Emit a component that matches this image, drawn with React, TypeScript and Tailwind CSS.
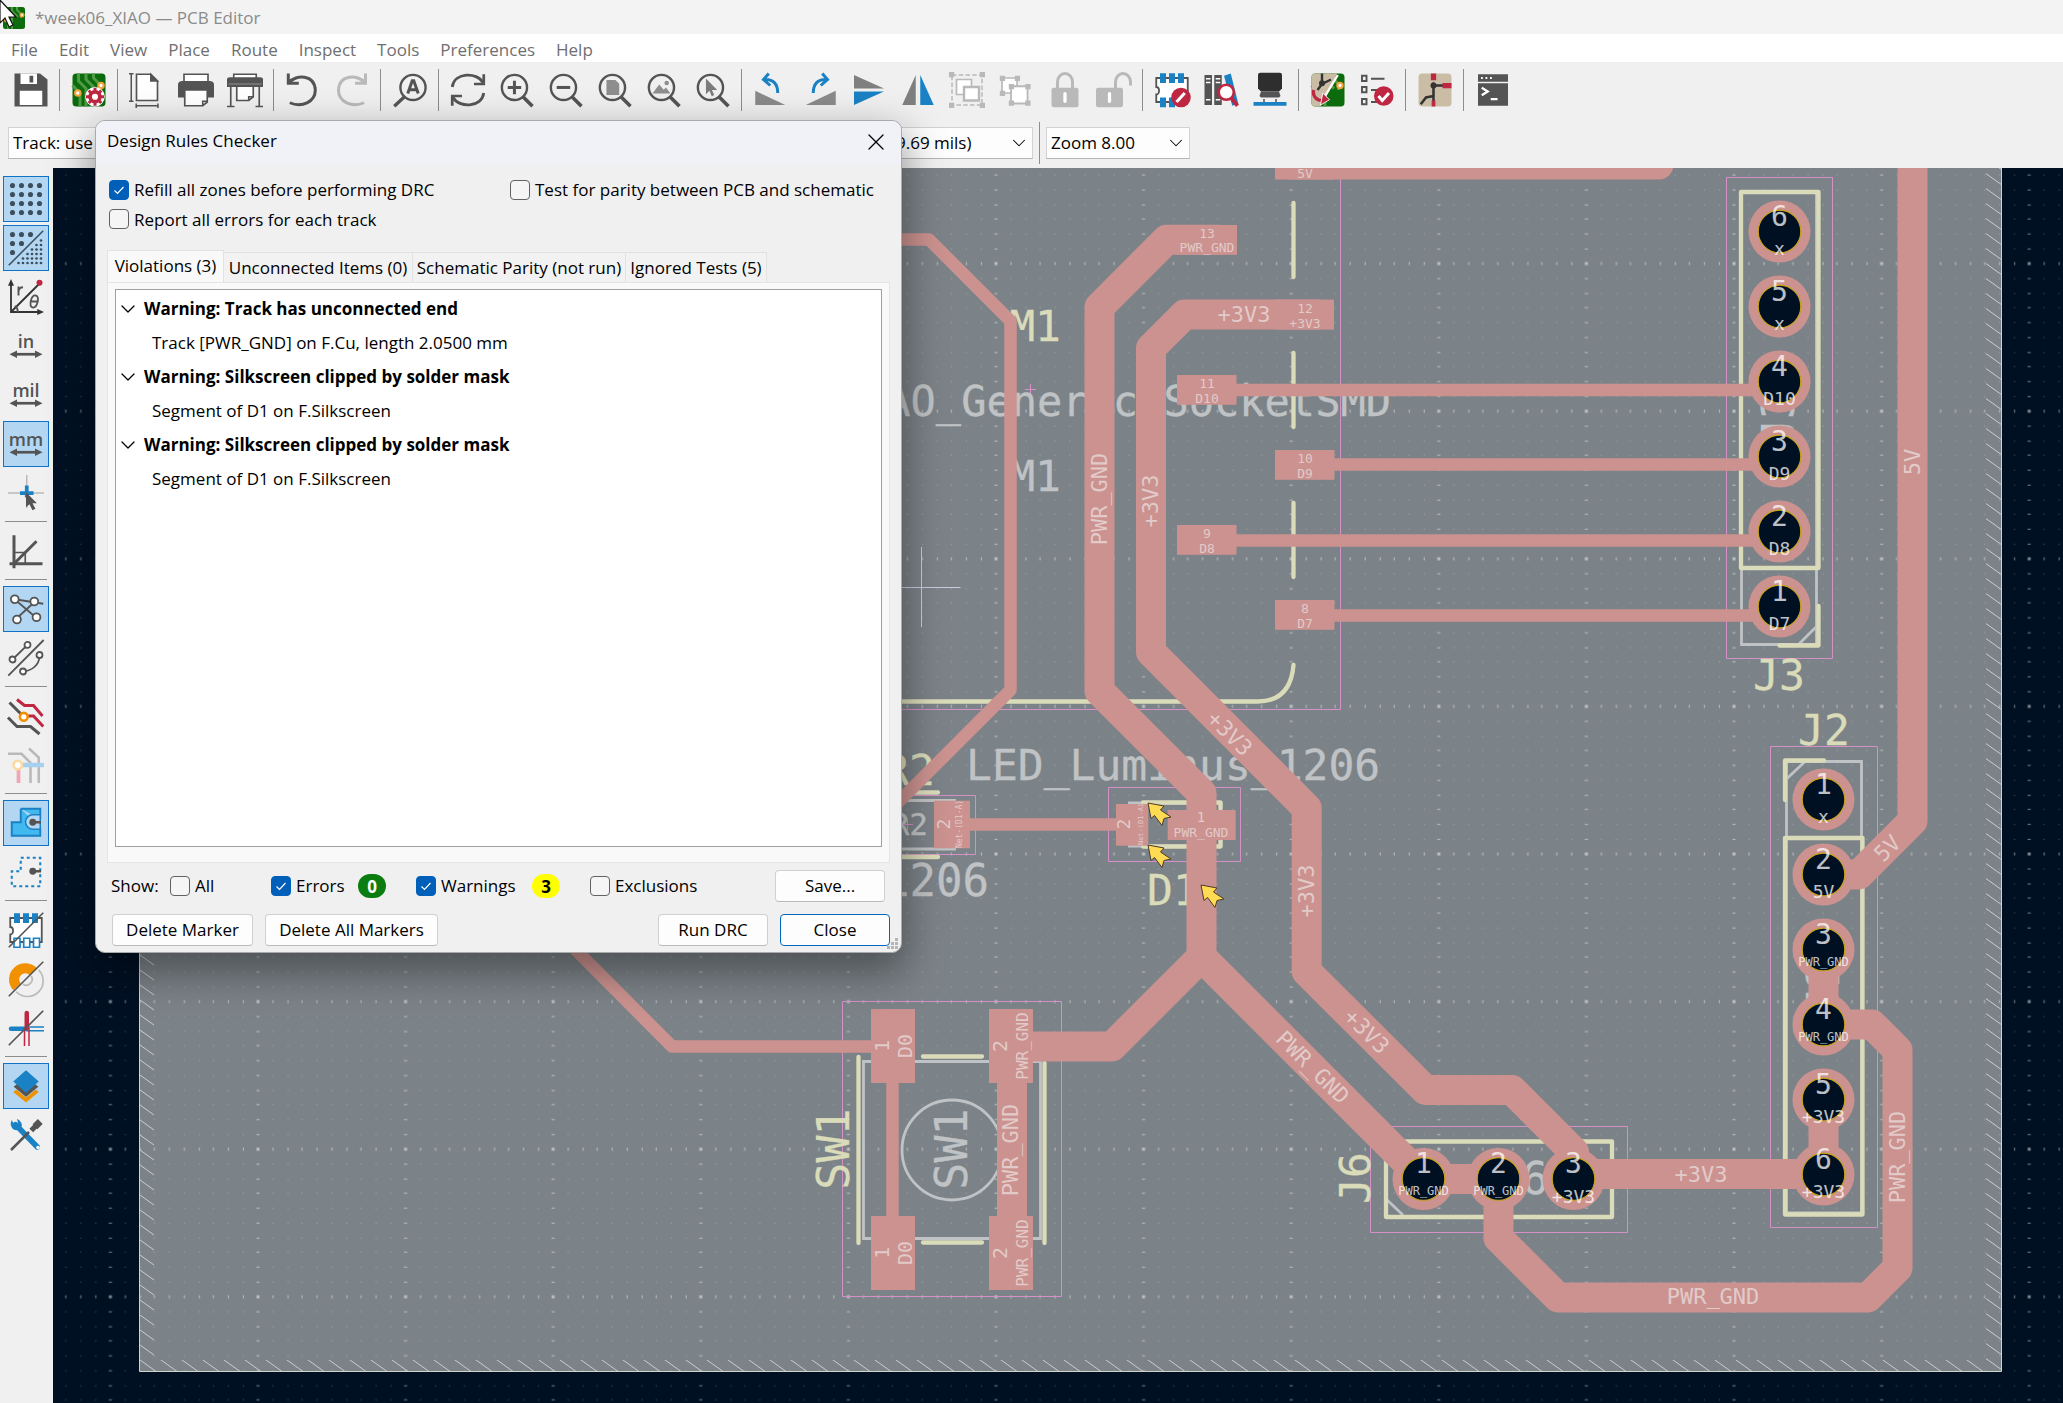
import React, { useState } from "react";
import { ChevronDown, X } from "lucide-react";

const UI = "font-['Open_Sans','Noto_Sans',sans-serif]";

/* ---------- icons ---------- */

type Kids = { children?: React.ReactNode };

const Ico = ({ children }: Kids) => (
  <svg viewBox="0 0 24 24" className="size-9 overflow-visible" fill="none" stroke="#545454" strokeWidth="1.5" aria-hidden="true">
    {children}
  </svg>
);

const G = "#545454";
const B = "#1a81c4";
const R = "#bf2641";
const L = "#b9b9b9";

const PcbBase = () => (
  <>
    <rect x="1" y="1" width="22" height="22" rx="2.5" fill="#0c6b0c" stroke="none" />
    <path d="M5 1v5l5 5v12M10 1v4l6 6M15 1v3l4 4v4M1 9l5 5v9" stroke="#4f9a45" strokeWidth="2" />
    <circle cx="4.5" cy="14" r="1.8" fill="#fff" stroke="#f2a33a" strokeWidth="1.4" />
    <circle cx="20" cy="9" r="1.8" fill="#fff" stroke="#f2a33a" strokeWidth="1.4" />
  </>
);

const Zoom = ({ children }: Kids) => (
  <Ico>
    <g transform="translate(-2.2 .8)">
      <circle cx="12.5" cy="9.5" r="8.4" strokeWidth="1.6" />
      <path d="M18 15.500l6.500 6.500" strokeWidth="2.400" />
      {children}
    </g>
  </Ico>
);

const IcSave = () => <Ico><path d="M1 1h17l5 4v18H1z" fill={G} stroke="none" /><path d="M5 1h11v7H5zM4.5 12.500h15V22h-15z" fill="#fff" stroke="none" /><path d="M11 2.500h2.500v4.500H11z" fill={G} stroke="none" /></Ico>;
const IcBoardSetup = () => (
  <Ico>
    <PcbBase />
    <circle cx="16" cy="16.500" r="4" fill="#fff" stroke="#fff" strokeWidth="5" />
    <circle cx="16" cy="16.500" r="3.300" stroke={R} strokeWidth="2.500" />
    <path d="M16 10.500v3M16 19.500v3M10 16.500h3M19 16.500h3M11.800 12.300l2 2M18.200 18.700l2 2M20.200 12.300l-2 2M13.800 18.700l-2 2" stroke={R} strokeWidth="2" />
  </Ico>
);
const IcPage = () => <Ico><g transform="translate(-1 0)"><path d="M6 1.500h9.500L20 6v13H6z" fill="#fff" strokeWidth="1.100" /><path d="M15.500 1.500V6H20z" fill={G} strokeWidth="1" /><path d="M2.500 1v18.500M1 1.200h3M1 19.500h3M5.500 22.500h15M5.800 21v3M20.300 21v3" strokeWidth="1" /></g></Ico>;
const IcPrint = () => <Ico><path d="M4 6V1.500h16V6" fill="#fff" strokeWidth="1.100" /><path d="M0 8.500Q0 6 3 6h18q3 0 3 2.500V17h-4v-5H4v5H0z" fill={G} stroke="none" /><path d="M4.500 12h15v8l-3 2.500h-12z" fill="#fff" strokeWidth="1.100" /><path d="M16.500 22.500v-3h3" strokeWidth="1.100" /></Ico>;
const IcPlot = () => <Ico><path d="M4.500 4V1.500h15V4" fill="#fff" strokeWidth="1.100" /><path d="M0 5q0-1.500 2-1.500h20q2 0 2 1.500v5H0z" fill={G} stroke="none" /><path d="M1 8h22" stroke="#9a9a9a" strokeWidth=".6" /><path d="M2.500 10v13M21.500 10v13M0 23h5M19 23h5" strokeWidth="1.100" /><path d="M6.500 9.500h11v7l-3 2.500h-8z" fill="#fff" strokeWidth="1.100" /><path d="M14.500 19v-2.500h3" strokeWidth="1.100" /></Ico>;
const IcUndo = () => <Ico><g transform="translate(-.8 0)"><path d="M3 1v6.500h7M3.500 7C8 1.500 20.500 1.500 21 12c0 8-9 12-17 8.500" strokeWidth="2" /></g></Ico>;
const IcRedo = () => <Ico><g stroke={L}><path d="M21 1v6.500h-7M20.500 7C16 1.500 3.500 1.500 3 12c0 8 9 12 17 8.500" strokeWidth="2" /></g></Ico>;
const IcFind = () => <Ico><g transform="translate(-.5 .8)"><circle cx="14.500" cy="9.500" r="8.400" strokeWidth="1.600" /><path d="M9 15.500l-7 6.500" strokeWidth="2.200" /><path d="M11 13.500l3-8.500h1l3 8.500M12 11h5" strokeWidth="2" /></g></Ico>;
const IcRefresh = () => <Ico><path d="M1.500 10C3 0 18 0 22 7M22.500 14c-1.500 10-16.500 10-20.500 3" strokeWidth="1.900" /><path d="M22.500 1.500V8H16M1.500 22.500V16H8" strokeWidth="1.800" /></Ico>;
const IcZoomIn = () => <Zoom><path d="M12.500 5v9M8 9.500h9" strokeWidth="2" /></Zoom>;
const IcZoomOut = () => <Zoom><path d="M8 9.500h9" strokeWidth="2" /></Zoom>;
const IcZoomPage = () => <Zoom><path d="M8.500 4.500h6L17 7v7.500H8.500z" fill="#8e8e8e" stroke="none" /></Zoom>;
const IcZoomObj = () => <Zoom><path d="M6.500 13.500l4.500-6 3 3.500 1.500-1.500 3 4z" fill="#8e8e8e" stroke="none" /><circle cx="16" cy="6.500" r="1.500" fill="#8e8e8e" stroke="none" /></Zoom>;
const IcZoomSel = () => <Zoom><path d="M9.500 3.500v10.500l2.300-2.300 1.600 3.600 1.600-.8-1.500-3.300h3.500z" fill="#7c7c7c" stroke="none" /></Zoom>;
const IcRotL = () => <Ico><path d="M1.500 12.500v9.500h20z" fill="#8a8a8a" stroke="none" /><path d="M10.500 1L7 5l4.500 4M7.500 5c6-.5 9 3 9 9" stroke={B} strokeWidth="2" /></Ico>;
const IcRotR = () => <Ico><path d="M22.500 12.500v9.500h-20z" fill="#8a8a8a" stroke="none" /><path d="M13.500 1L17 5l-4.500 4M16.500 5c-6-.5-9 3-9 9" stroke={B} strokeWidth="2" /></Ico>;
const IcFlipV = () => <Ico><path d="M2 2v9h20z" fill="#7f7f7f" stroke="none" /><path d="M2 22v-9h20z" fill={B} stroke="none" /></Ico>;
const IcFlipH = () => <Ico><path d="M1.500 22h9V2z" fill="#7f7f7f" stroke="none" /><path d="M22.500 22h-9V2z" fill={B} stroke="none" /></Ico>;
const IcGroup = () => <Ico><g stroke={L}><path d="M2 2h20v20H2z" strokeWidth="1" strokeDasharray="3 1.500" /><path d="M0 0h3.500v3.500H0zM20.500 0H24v3.500h-3.500zM0 20.500h3.500V24H0zM20.500 20.500H24V24h-3.500z" fill={L} stroke="none" /><path d="M5 5h10v10H5z" fill="#fff" strokeWidth="1.100" /><path d="M10 10h10v9H10z" fill="#fff" strokeWidth="1.600" /></g></Ico>;
const IcUngroup = () => <Ico><g stroke={L} transform="translate(-1.300 0)"><path d="M4 4h10v10H4z" fill="#fff" strokeWidth="1.100" /><path d="M10 9.500h11V21H10z" fill="#fff" strokeWidth="1.200" /><path d="M2.500 2.500H6V6H2.500zM12.500 2.500H16V6h-3.500zM2.500 12.500H6V16H2.500zM8.500 8H12v3.500H8.500zM19.500 8H23v3.500h-3.500zM8.500 19H12v3.500H8.500zM19.500 19H23v3.500h-3.500z" fill={L} stroke="none" /></g></Ico>;
const IcLock = () => <Ico><path d="M7 12V6.500a5 5.500 0 0 1 10 0V12" stroke={L} strokeWidth="2" /><rect x="3" y="10.500" width="18" height="13" rx="1.500" fill={L} stroke="none" /><path d="M12 14.500v5" stroke="#fff" strokeWidth="2.200" strokeLinecap="round" /></Ico>;
const IcUnlock = () => <Ico><path d="M13 12V6.500a5 5.500 0 0 1 10 0V9" stroke={L} strokeWidth="2" /><rect x="0" y="10.500" width="18" height="13" rx="1.500" fill={L} stroke="none" /><path d="M9 14.500v5" stroke="#fff" strokeWidth="2.200" strokeLinecap="round" /></Ico>;
const Chip = () => (
  <>
    <path d="M1.500 4h21v16h-21v-5c2.500 0 2.500-5 0-5z" fill="#fff" strokeWidth="1.200" />
    <path d="M4 .8h4v6.500H4zM10 .8h4v6.500h-4zM16 .8h4v6.500h-4z" fill={B} stroke="none" />
  </>
);
const IcFootprint = () => <Ico><Chip /><path d="M4 17h4v6.500H4zM10 17h4v6.500h-4z" fill={B} stroke="none" /><circle cx="18" cy="17" r="6.500" fill={R} stroke="none" /><path d="M15 20l5.500-6" stroke="#fff" strokeWidth="2" /></Ico>;
const IcLibrary = () => <Ico><path d="M1 2h5v20H1zM7.500 2h5v20h-5z" fill={G} stroke="none" /><path d="M14 2.500l4.500-1.500 5 20-4 1.500z" fill={B} stroke="none" /><path d="M2 4.500h3M2 7h3M8.500 4.500h3M8.500 7h3M2 18.500h3M8.500 18.500h3" stroke="#fff" strokeWidth="1" /><circle cx="15.500" cy="13.500" r="5" fill="#fff" stroke={R} strokeWidth="1.700" /><path d="M19 17.500l4 5" stroke={R} strokeWidth="2.600" /></Ico>;
const Ic3d = () => <Ico><path d="M4 2q0-1.500 1.500-1.500h13Q20 .5 20 2v9l-2 2H6l-2-2z" fill="#2e2e2e" stroke="none" /><path d="M6 13h12l1 3-1 1H6l-1-1z" fill={G} stroke="none" /><path d="M8 18v3M16 18v3" strokeWidth="1" /><path d="M1 20h22v2.500H1z" fill={B} stroke="none" /></Ico>;
const IcUpdate = () => (
  <Ico>
    <PcbBase />
    <path d="M3.500 1H18L7 23H3.500Q1 23 1 20.500v-17Q1 1 3.500 1z" fill="#cbbda5" stroke="none" />
    <path d="M8 1v6M8 8l6-3M8 8l-3 4" stroke="#333" strokeWidth="1.600" />
    <circle cx="8" cy="7.500" r="2" fill="#333" stroke="none" />
    <path d="M18.500 2L9.500 17" stroke="#fff" strokeWidth="1.600" />
    <path d="M2.500 12c-1 4 2 7.500 7 7" stroke={R} strokeWidth="2.200" />
    <path d="M8.500 14l4.500 4.500L7 22z" fill={R} stroke="#fff" strokeWidth=".6" />
  </Ico>
);
const IcDrc = () => <Ico><path d="M2 2.500h3v3.500H2zM2 10h3v3.500H2zM2 18h3v3.500H2zM8 4.500h9M8 12h4M8 20h4" strokeWidth="1.300" /><circle cx="16.500" cy="16" r="6.500" fill={R} stroke="none" /><path d="M13 16l2.500 3 4.500-5" stroke="#fff" strokeWidth="2" /></Ico>;
const IcSch = () => (
  <Ico>
    <rect x="1" y="1" width="22" height="22" rx="2.500" fill="#cbbda5" stroke="none" />
    <path d="M11 7v9l-5 1-3.500 4.500M11 9h7M11 16v4" stroke="#333" strokeWidth="1.700" />
    <path d="M11 1v4.500M17 9h6" stroke={R} strokeWidth="3.500" />
    <circle cx="11" cy="9" r="2" fill="#333" stroke="none" />
    <path d="M11 19v4" stroke={R} strokeWidth="2.500" />
  </Ico>
);
const IcConsole = () => <Ico><path d="M2 1.500h20v5H2zM2 7.500h20v15H2z" fill={G} stroke="none" /><path d="M4 4h1.200M7 4h1.200M10 4h1.200" stroke="#fff" strokeWidth="1.300" /><path d="M4.500 10.500l4 2.500-4 2.500M10.500 18h4.500" stroke="#fff" strokeWidth="1.500" /></Ico>;

/* left bar */
const SG = "#3c4d5c";
const dots = (step: number, n: number, x0: number, y0: number, r: number, keep: (i: number, j: number) => boolean) =>
  Array.from({ length: n * n }, (_, k) => [k % n, Math.floor(k / n)])
    .filter(([i, j]) => keep(i, j))
    .map(([i, j]) => <circle key={`${i}-${j}-${step}`} cx={x0 + i * step} cy={y0 + j * step} r={r} fill={SG} stroke="none" />);
const IcGrid = () => <Ico>{dots(6, 4, 3, 3, 1.7, () => true)}</Ico>;
const IcGridOv = () => <Ico>{dots(6, 3, 3, 3, 1.7, (i, j) => i + j < 3)}{dots(3, 6, 7, 7, 0.9, (i, j) => i + j > 4)}<path d="M.5 23.500l23-23" stroke={SG} strokeWidth="1" /></Ico>;
const IcPolar = () => <Ico><path d="M2 2v20h20M2 22L21 3" stroke="#333" strokeWidth="1.200" /><path d="M0 4.500L2 0l2 4.500zM19.500 20l4.500 2-4.500 2z" fill="#333" stroke="none" /><circle cx="21" cy="2.500" r="2" fill={R} stroke="none" /><path d="M7 11V5M7 8q.5-2.500 3-2.500M6.500 22q0-3-2-4" strokeWidth="1.300" /><path d="M16.500 19c-3-1-1-8.500 2-8s1 8.500-2 8zM15.500 15h4.500" strokeWidth="1.200" /></Ico>;
const Unit = ({ t }: { t: string }) => (
  <Ico>
    <text x="12" y="13" textAnchor="middle" fontSize="12" fontWeight="600" fill={G} stroke="none" fontFamily="Open Sans">{t}</text>
    <path d="M4 17.500h16" strokeWidth="1.800" />
    <path d="M1 17.500L6 15v5zM23 17.500L18 15v5z" fill={G} stroke="none" />
  </Ico>
);
const IcIn = () => <Unit t="in" />;
const IcMil = () => <Unit t="mil" />;
const IcMm = () => <Unit t="mm" />;
const IcCursor = () => <Ico><path d="M12.500 0v22M0 12h24" stroke={L} strokeWidth="1" /><path d="M12.500 7v8M8 12h9" stroke={B} strokeWidth="2.500" /><path d="M12 11.500v10l2.300-2 2 4 2-1-2-3.700h3z" fill={G} stroke="none" /></Ico>;
const IcAngle = () => <Ico><path d="M4 1.500v22M1 20.500h22" strokeWidth="2" /><path d="M4 20.500L19 5.500" strokeWidth="2" /><path d="M4 13h7.500v7.500" strokeWidth="1.100" /></Ico>;
const IcRats = () => <Ico><path d="M4.500 5.500L23.500 8.500M5 6l14 12M5.500 18.500L18 7" strokeWidth="1.200" /><g fill="#fff" strokeWidth="1.200"><circle cx="4.500" cy="5.500" r="2.600" /><circle cx="17.500" cy="7" r="2.600" /><circle cx="6" cy="19" r="2.600" /><circle cx="19" cy="17.500" r="2.600" /></g></Ico>;
const IcCurved = () => <Ico><path d="M3 13L13 3.300M.2 23.800L23.800 0M21 11.500q-1 8-11 9.600" strokeWidth="1.200" /><g fill="#fff" strokeWidth="1.200"><circle cx="3" cy="13" r="2" /><circle cx="13" cy="3.300" r="2" /><circle cx="21" cy="10" r="2" /><circle cx="10" cy="21" r="2" /></g></Ico>;
const IcContrast = () => <Ico><path d="M1 3l8 8M0 13l6 6h9l6 5" strokeWidth="2" /><path d="M6 1l5 4h6l6 7M13 12h4l6.500 7" stroke={R} strokeWidth="2" /><circle cx="10.500" cy="12.500" r="2.600" fill="#fff" stroke="#f29100" strokeWidth="1.700" /></Ico>;
const IcNetDim = () => <Ico><path d="M0 4.500h9l6 6V24M14 1l6.500 6V24" stroke={L} strokeWidth="1.700" /><path d="M7 12v12" stroke="#f0a6b4" strokeWidth="2.500" /><path d="M9 12h15" stroke="#a7d0ee" strokeWidth="3" /><circle cx="6.500" cy="12" r="2.800" fill="#fff" stroke="#fbd9a0" strokeWidth="1.700" /></Ico>;
const IcZone = () => <Ico><path d="M8.500 2.500h13v7M21.500 15v5.500h-19v-9h6v-9" fill="#41b8ef" stroke={B} strokeWidth="1.300" /><path d="M21.500 6.500h-5a4.800 4.800 0 0 0 0 9.600h5z" fill="#b3d7f2" stroke={B} strokeWidth="1" /><circle cx="16.500" cy="11.500" r="2.300" fill={G} stroke="none" /><path d="M16.500 11.500h5.500" strokeWidth="1.700" /></Ico>;
const IcZoneOut = () => <Ico><path d="M8.500 2.500h13v19h-19v-10h6z" stroke={B} strokeWidth="1.400" strokeDasharray="2 2" /><circle cx="16.500" cy="11.500" r="2.300" fill={G} stroke="none" /><path d="M16.500 11.500h5.500" strokeWidth="1.700" /></Ico>;
const IcFpOut = () => <Ico><Chip /><path d="M4 17.500h4v6H4zM10.500 17.500h4v6h-4zM17 17.500h4v6h-4z" fill="#fff" stroke={B} strokeWidth="1.100" /><path d="M.5 23.500l23-23" strokeWidth="1.100" /></Ico>;
const IcViaOut = () => <Ico><path d="M3.500 19.500A10 10 0 1 1 19.500 5l-5 4.500a4 4 0 0 0-6 5.500z" fill="#f29100" stroke="none" /><path d="M20.500 6A10 10 0 0 1 5.500 20.500M15.500 10a4 4 0 0 1-5.500 5.500" stroke={L} strokeWidth="1.100" /><path d="M.5 23.500l23-23" strokeWidth="1.100" /></Ico>;
const IcTrackOut = () => <Ico><path d="M2 12.500h10" stroke={B} strokeWidth="3" strokeLinecap="round" /><path d="M12 11.300h12M12 13.800h12" stroke={B} strokeWidth=".9" /><path d="M12.500 2v10" stroke={R} strokeWidth="3" strokeLinecap="round" /><path d="M11 12v12M14 12v12" stroke={R} strokeWidth="1" /><path d="M.5 23.500l23-23" strokeWidth="1.100" /></Ico>;
const IcLayers = () => <Ico><path d="M3.500 16L12 23l8.500-7-3-2.500h-11z" fill="#f29100" stroke="none" /><path d="M3.500 12.500L12 19.500l8.500-7-3-2.500h-11z" fill={G} stroke="#b3d7f2" strokeWidth=".5" /><path d="M12 1.500l8.500 7.500-8.500 7.500L3.500 9z" fill={B} stroke="none" /></Ico>;
const IcTools = () => <Ico><path d="M5 5l14.500 15" stroke={B} strokeWidth="3.600" strokeLinecap="round" /><path d="M2.500 2Q.5 6 4 8.500q4 1 5-2T6 1.200L7 5 4.500 6z" fill={B} stroke="none" /><circle cx="20" cy="20.300" r="1.200" fill="#fff" stroke="none" /><path d="M2 22L14 10" strokeWidth="1.700" /><path d="M15.500 9l3.500-3.500" strokeWidth="3.500" /><path d="M18 6.500L21.500 3" strokeWidth="4.500" strokeLinejoin="round" /></Ico>;

type Item = [string, () => React.ReactElement, boolean?] | null;

const topItems: Item[] = [
  ["Save", IcSave], null, ["Board setup", IcBoardSetup], null, ["Page settings", IcPage], ["Print", IcPrint], ["Plot", IcPlot], null,
  ["Undo", IcUndo], ["Redo", IcRedo], null, ["Find", IcFind], null, ["Refresh", IcRefresh], ["Zoom in", IcZoomIn], ["Zoom out", IcZoomOut],
  ["Zoom to page", IcZoomPage], ["Zoom to objects", IcZoomObj], ["Zoom to selection", IcZoomSel], null, ["Rotate left", IcRotL],
  ["Rotate right", IcRotR], ["Mirror vertically", IcFlipV], ["Mirror horizontally", IcFlipH], ["Group", IcGroup], ["Ungroup", IcUngroup],
  ["Lock", IcLock], ["Unlock", IcUnlock], null, ["Footprint editor", IcFootprint], ["Footprint library", IcLibrary], ["3D viewer", Ic3d], null,
  ["Update PCB from schematic", IcUpdate], ["Run design rules checker", IcDrc], null, ["Schematic editor", IcSch], null, ["Scripting console", IcConsole],
];

const sideItems: Item[] = [
  ["Show grid", IcGrid, true], ["Grid overrides", IcGridOv, true], ["Polar coordinates", IcPolar], ["Inches", IcIn], ["Mils", IcMil],
  ["Millimeters", IcMm, true], ["Full-window crosshair", IcCursor], null, ["Constrain angles", IcAngle], null, ["Show ratsnest", IcRats, true],
  ["Curved ratsnest", IcCurved], null, ["High contrast", IcContrast], ["Net highlighting", IcNetDim], null, ["Show filled zones", IcZone, true],
  ["Show zone outlines", IcZoneOut], null, ["Footprint outlines", IcFpOut], ["Via outlines", IcViaOut], ["Track outlines", IcTrackOut], null,
  ["Appearance panel", IcLayers, true], ["Properties panel", IcTools],
];

/* ---------- board drawing ---------- */

const CU = "#cb928f";
const SILK = "#dadcb9";
const FAB = "#c0c3c5";
const COURT = "#d690c8";
const NET = "#e2cac9";

type LabelProps = { x: number; y: number; s: number; c?: string; r?: number; a?: "start" | "middle" | "end"; o?: number; children: string };

/* x, y is the middle of the capitals' height; large legends get a heavier pen */
const T = ({ x, y, s, c = NET, r = 0, a = "middle", o = 1, children }: LabelProps) => (
  <text
    transform={`translate(${x} ${y}) rotate(${r})`}
    y={s * 0.365}
    fontSize={s}
    fill={c}
    stroke={s > 30 ? c : "none"}
    strokeWidth="0.3"
    opacity={o}
    textAnchor={a}
    fontFamily="DejaVu Sans Mono, monospace"
  >
    {children}
  </text>
);

const Pad = ({ x, y, w, h }: { x: number; y: number; w: number; h: number }) => <rect x={x} y={y} width={w} height={h} fill={CU} />;

const Hole = ({ x, y, n, net }: { x: number; y: number; n: string; net: string }) => {
  const small = net === "PWR_GND";
  return (
    <g>
      <circle cx={x} cy={y} r="31" fill={CU} />
      <circle cx={x} cy={y} r="21.3" fill="#001023" stroke="#c6a11c" strokeWidth="1.2" />
      <T x={x} y={y - 16} s={28} c="#fff" o={0.74}>{n}</T>
      <T x={x} y={small ? y + 12 : y + 17} s={small ? 12 : 18} c="#fff" o={0.74}>{net}</T>
    </g>
  );
};

const Marker = ({ x, y }: { x: number; y: number }) => (
  <path transform={`translate(${x} ${y})`} d="M0 0L16 3 12.500 7 23 14 16 15.500 14 22.500 6.500 12.500 3 15.500z" fill="#ffdb54" stroke="#4b3a2a" strokeWidth="1" />
);

const j3: [string, string][] = [["6", "x"], ["5", "x"], ["4", "D10"], ["3", "D9"], ["2", "D8"], ["1", "D7"]];
const j2: [string, string][] = [["1", "x"], ["2", "5V"], ["3", "PWR_GND"], ["4", "PWR_GND"], ["5", "+3V3"], ["6", "+3V3"]];
const j6: [string, string][] = [["1", "PWR_GND"], ["2", "PWR_GND"], ["3", "+3V3"]];
const smd: [number, number, string, string][] = [
  [1177, 375, "11", "D10"], [1275, 450, "10", "D9"], [1177, 525, "9", "D8"], [1275, 600, "8", "D7"],
];
const P = 14.76;

const Board = () => (
  <svg className="block size-full" viewBox="53 168 2010 1235" preserveAspectRatio="xMinYMin slice" role="img" aria-label="PCB layout">
    <defs>
      <pattern id="grid" x="996" y="263.6" width={P * 10} height={P * 10} patternUnits="userSpaceOnUse" patternTransform="translate(-3 -3)">
        <g fill="#fff">
          {Array.from({ length: 100 }, (_, k) => {
            const i = k % 10;
            const j = Math.floor(k / 10);
            const w = i === 0 ? 3 : 1;
            const h = j === 0 ? 3 : 1;
            const o = i === 0 || j === 0 ? 0.5 : 0.3;
            return <rect key={k} x={3 + Math.round(i * P) - w / 2} y={3 + Math.round(j * P) - h / 2} width={w} height={h} opacity={o} />;
          })}
        </g>
      </pattern>
      <pattern id="hatch" width="21" height="15" patternUnits="userSpaceOnUse">
        <path d="M-21 -15L42 30M-21 0L21 30M0 -15L42 15" stroke="#c9cccd" strokeWidth="1" />
      </pattern>
    </defs>
    <rect x="53" y="168" width="2010" height="1235" fill="#001023" />
    <path d="M139 150H2001V1371H139z" fill="#7c8388" />
    <rect x="53" y="168" width="2010" height="1235" fill="url(#grid)" />
    <path d="M139 150h15v1210h1832V150h15v1221H139z" fill="url(#hatch)" />
    <path d="M139.500 150V1371.500H2001.500V150" fill="none" stroke="#d0d2cd" />

    {/* courtyards */}
    <g fill="none" stroke={COURT} strokeWidth="1">
      <path d="M1340.500 168v541.500H800M890 795.500h85.500v59H890" />
      <path d="M1108.500 787.500h132v74h-132zM842.500 1001.500h219v295h-219zM1370.500 1126.500h257v106h-257zM1770.500 746.500h107v481h-107zM1726.500 177.500h106v481h-106z" />
      <path d="M1025 389.500h11M1030.500 384v11M901 824.500h12M907.500 818v12" />
    </g>

    {/* fabrication layer */}
    <g fill="none" stroke={FAB} strokeWidth="2.8">
      <path d="M863.500 1061.500h177v177h-177z" />
      <circle cx="952" cy="1150" r="50" />
      <path d="M880 800.500h76M880 849h76M1128 803h93v43h-93M1386 1199l17 16" />
      <path d="M1741.500 192v452.500h75V192M1799 644l18-18M1786.500 761.500h75V1213h-75zM1786.500 779l18-17" />
    </g>
    <T x={1391} y={401} s={42} c={FAB} a="end">XIAO_Generic_SocketSMD</T>
    <T x={1061} y={475} s={43} c={FAB} a="end">M1</T>
    <T x={966} y={764} s={43} c={FAB} a="start">LED_Luminus_1206</T>
    <T x={928} y={824} s={31} c={FAB} a="end">R2</T>
    <T x={989} y={880} s={44} c={FAB} a="end">R_1206</T>
    <T x={951} y={1149} s={45} c={FAB} r={-90}>SW1</T>
    <T x={1535} y={1178} s={44} c={FAB}>6</T>
    <T x={1778} y={419} s={44} c={FAB} r={-90}>J3</T>
    <T x={1823} y={987} s={44} c={FAB} r={-90}>J2</T>

    {/* silkscreen */}
    <g fill="none" stroke={SILK} strokeWidth="4.300" strokeLinecap="round" strokeLinejoin="round">
      <path d="M1293.500 203v74M1293.500 353v74M1293.500 503v74M1293.500 665q-3 36.500-36 36.500H850" />
      <path d="M880 792.500h58M880 857h58M1143 802.500h77.500v6M1143 846.500h77.500v-6" />
      <path d="M858.500 1057v186M1044.500 1063v180M923 1056.500h59M923 1242.500h59" />
      <path d="M1386 1141.500h226v75.500h-226z" />
      <path d="M1785 838h77.500v376.500h-77.500zM1785 800v-39.500h39" />
      <path d="M1741 192h77.500v376h-77.500zM1818.500 606v39.500h-39" />
    </g>
    <T x={1061} y={325} s={43} c={SILK} a="end">M1</T>
    <T x={935} y={769} s={43} c={SILK} a="end">R2</T>
    <T x={1147} y={889} s={43} c={SILK} a="start">D1</T>
    <T x={833} y={1149} s={45} c={SILK} r={-90}>SW1</T>
    <T x={1354} y={1178} s={43} c={SILK} r={-90}>J6</T>
    <T x={1779} y={674} s={43} c={SILK}>J3</T>
    <T x={1824} y={729} s={43} c={SILK}>J2</T>

    {/* copper */}
    <g fill="none" stroke={CU} strokeLinecap="round" strokeLinejoin="round">
      <g strokeWidth="12.500">
        <path d="M880 239.500H929L1010.500 321V690L880 820.500" />
        <path d="M560 934L672 1046.500H890M950 824.500h180M892.500 1050v200" />
        <path d="M1210 390H1770M1310 464.500H1770M1210 540.500H1770M1310 615.500H1770" />
      </g>
      <g strokeWidth="30">
        <path d="M1220 239.800H1166.500L1099.500 307V691L1201.500 793V957L1112 1046.500H1012V1250" />
        <path d="M1201.500 957L1423.500 1179H1498.500V1238L1558 1297.500H1868L1897.500 1268V1050L1872 1024.500H1823.500V949" />
        <path d="M1318 314.600H1184.500L1151 348V652L1306.700 808V971.500L1425.500 1090H1512L1574 1152V1174H1823.500V1099" />
        <path d="M1912.500 140V821L1859 874.500H1823.500" />
      </g>
      <path d="M1290 165H1659" strokeWidth="29" />
    </g>
    <Pad x={1275} y={150} w={59} h={29.5} />
    <Pad x={1177} y={225} w={60} h={29.800} />
    <Pad x={1275} y={299.600} w={59} h={30} />
    {smd.map(([x, y, n, net]) => (
      <g key={n}>
        <Pad x={x} y={y} w={59.500} h={29.800} />
        <T x={x + 30} y={y + 8} s={13}>{n}</T>
        <T x={x + 30} y={y + 23} s={13}>{net}</T>
      </g>
    ))}
    <Pad x={934} y={800.700} w={36} h={47.600} />
    <Pad x={1116} y={804} w={32.300} h={41.700} />
    <Pad x={1167.700} y={810} w={68} h={30} />
    {[1009, 1216].map((y) => (
      <g key={y}>
        <Pad x={871} y={y} w={44} h={74} />
        <Pad x={989} y={y} w={44} h={74} />
        <T x={882} y={y + 37} s={20} r={-90}>1</T>
        <T x={905} y={y + 37} s={20} r={-90}>D0</T>
        <T x={1000} y={y + 37} s={20} r={-90}>2</T>
        <T x={1022} y={y + 37} s={16} r={-90}>PWR_GND</T>
      </g>
    ))}
    {j3.map(([n, net], i) => <Hole key={n} x={1779.500} y={231.500 + i * 75} n={n} net={net} />)}
    {j2.map(([n, net], i) => <Hole key={n} x={1823.500} y={799.500 + i * 75} n={n} net={net} />)}
    {j6.map(([n, net], i) => <Hole key={n} x={1423.500 + i * 75} y={1179} n={n} net={net} />)}

    {/* net names */}
    <T x={1305} y={173} s={13}>5V</T>
    <T x={1207} y={233} s={13}>13</T>
    <T x={1207} y={247} s={13}>PWR_GND</T>
    <T x={1305} y={308} s={13}>12</T>
    <T x={1305} y={323} s={13}>+3V3</T>
    <T x={1244} y={314} s={22}>+3V3</T>
    <T x={1099} y={499} s={22} r={-90}>PWR_GND</T>
    <T x={1150} y={501} s={22} r={-90}>+3V3</T>
    <T x={1230} y={733} s={22} r={45}>+3V3</T>
    <T x={1306} y={891} s={22} r={-90}>+3V3</T>
    <T x={1367} y={1031} s={22} r={45}>+3V3</T>
    <T x={1313} y={1067} s={22} r={45}>PWR_GND</T>
    <T x={1010} y={1150} s={22} r={-90}>PWR_GND</T>
    <T x={1897} y={1157} s={22} r={-90}>PWR_GND</T>
    <T x={1713} y={1296} s={22}>PWR_GND</T>
    <T x={1701} y={1174} s={22}>+3V3</T>
    <T x={1912} y={462} s={22} r={-90}>5V</T>
    <T x={1887} y={848} s={22} r={-45}>5V</T>
    <T x={1201} y={817} s={14}>1</T>
    <T x={1201} y={832} s={13}>PWR_GND</T>
    <T x={943} y={824} s={18} r={-90}>2</T>
    <T x={959} y={824} s={8} r={-90}>Net-(D1-A)</T>
    <T x={1123} y={824} s={18} r={-90}>2</T>
    <T x={1140} y={824} s={7} r={-90}>Net-(D1-A)</T>

    <Marker x={1148} y={803} />
    <Marker x={1148} y={845} />
    <Marker x={1201} y={885} />
    <path d="M921.500 547v80M882 587.500h78.500" stroke="#c9cde0" strokeWidth="1" />
  </svg>
);

/* ---------- controls ---------- */

const Check = ({ label, on = false }: { label: string; on?: boolean }) => {
  const [v, setV] = useState(on);
  return (
    <label className="flex items-center gap-[5px] whitespace-nowrap">
      <span className="grid size-5 place-items-center">
        <input
          type="checkbox"
          checked={v}
          onChange={() => setV(!v)}
          className="col-start-1 row-start-1 size-5 appearance-none rounded-[4px] border border-[#626262] bg-[#f5f5f5] checked:border-[#005fb8] checked:bg-[#005fb8]"
        />
        {v && (
          <svg viewBox="0 0 20 20" className="pointer-events-none col-start-1 row-start-1 size-5" fill="none" stroke="#fff" strokeWidth="1.2" aria-hidden="true">
            <path d="M5.500 10.500l3 3 6-6.500" />
          </svg>
        )}
      </span>
      {label}
    </label>
  );
};

const Combo = ({ name, text, w }: { name: string; text: string; w: string }) => (
  <span className={`grid ${w} items-center`}>
    <select aria-label={name} className="col-start-1 row-start-1 h-8 w-full appearance-none border border-[#d2d2d2] border-b-[#b5b5b5] bg-[#fdfdfd] pl-1 text-[17px] text-black">
      <option>{text}</option>
    </select>
    <ChevronDown className="pointer-events-none col-start-1 row-start-1 mr-[3px] size-[22px] justify-self-end" strokeWidth={1.1} />
  </span>
);

const Btn = ({ children, cls }: { children: string; cls: string }) => (
  <button className={`h-8 rounded-[4px] border bg-[#fdfdfd] ${cls}`}>{children}</button>
);

const violations = [
  ["Warning: Track has unconnected end", "Track [PWR_GND] on F.Cu, length 2.0500 mm"],
  ["Warning: Silkscreen clipped by solder mask", "Segment of D1 on F.Silkscreen"],
  ["Warning: Silkscreen clipped by solder mask", "Segment of D1 on F.Silkscreen"],
];

const tabs = ["Violations (3)", "Unconnected Items (0)", "Schematic Parity (not run)", "Ignored Tests (5)"];
const tabWidths = ["w-[117px]", "w-[189px]", "w-[213px]", "w-[141px]"];

const Dialog = () => (
  <section
    role="dialog"
    aria-label="Design Rules Checker"
    className="absolute top-[120px] left-[95px] flex h-[833px] w-[807px] flex-col overflow-hidden rounded-[10px] border border-[#a9a9ab] bg-[#f0f0f0] text-[17px] text-black shadow-[0_16px_40px_4px_rgba(0,0,0,0.38)]"
  >
    <header className="flex h-[43px] shrink-0 items-start justify-between bg-[#f1f2f8] pr-[11px] pl-[11px]">
      <h1 className="leading-10">Design Rules Checker</h1>
      <button aria-label="Close dialog" className="grid h-[42px] place-items-center"><X className="size-7" strokeWidth={1.1} /></button>
    </header>
    <div className="mt-[13px] grid grid-cols-[401px_1fr] gap-y-1 pl-[13px]">
      <Check label="Refill all zones before performing DRC" on />
      <Check label="Test for parity between PCB and schematic" />
      <Check label="Report all errors for each track" />
    </div>
    <div role="tablist" className="mt-[18px] flex h-8 items-end pl-[11px]">
      {tabs.map((t, i) => (
        <button
          key={t}
          role="tab"
          aria-selected={i === 0}
          className={`${tabWidths[i]} border-t border-r border-[#e2e2e2] whitespace-nowrap ${i === 0 ? "h-8 border-l bg-[#f9f9f9] pb-0.5" : "h-[30px] bg-[#f2f2f2]"}`}
        >
          {t}
        </button>
      ))}
    </div>
    <div className="mr-[11px] ml-[11px] min-h-0 flex-1 border border-[#e5e5e5] bg-[#f9f9f9] px-[7px] pt-1.5 pb-[15px]">
      <ul className="h-full border border-[#a0a0a0] bg-white pt-0.5">
        {violations.map(([h, d], i) => (
          <li key={i}>
            <div className="flex h-[34px] items-center gap-1 font-bold"><ChevronDown className="size-6" strokeWidth={1.3} />{h}</div>
            <div className="flex h-[34px] items-center pl-9">{d}</div>
          </li>
        ))}
      </ul>
    </div>
    <div className="mt-[7px] flex h-8 shrink-0 items-center pr-4 pl-[15px]">
      <div className="w-[59px]">Show:</div>
      <div className="w-[101px]"><Check label="All" /></div>
      <div className="w-[87px]"><Check label="Errors" on /></div>
      <div className="w-[58px]"><span className="grid h-6 w-7 place-items-center rounded-full bg-[#0b7d10] font-bold text-white">0</span></div>
      <div className="w-[116px]"><Check label="Warnings" on /></div>
      <div className="w-[58px]"><span className="grid h-6 w-7 place-items-center rounded-full bg-[#ffff00] font-bold">3</span></div>
      <Check label="Exclusions" />
      <Btn cls="ml-auto w-[110px] border-[#d0d0d0] border-b-[#bababa]">Save...</Btn>
    </div>
    <div className="mt-3 mb-1.5 flex shrink-0 gap-3 pr-[11px] pl-4">
      <Btn cls="w-[141px] border-[#d0d0d0] border-b-[#bababa]">Delete Marker</Btn>
      <Btn cls="w-[173px] border-[#d0d0d0] border-b-[#bababa]">Delete All Markers</Btn>
      <Btn cls="ml-auto w-[110px] border-[#d0d0d0] border-b-[#bababa]">Run DRC</Btn>
      <Btn cls="w-[110px] border-[#0067c0]">Close</Btn>
    </div>
    <svg className="absolute right-0.5 bottom-0.5 size-3" viewBox="0 0 12 12" fill="#b5b5b5" aria-hidden="true">
      <path d="M8 0h3v3H8zM4 4h3v3H4zM8 4h3v3H8zM0 8h3v3H0zM4 8h3v3H4zM8 8h3v3H8z" />
    </svg>
  </section>
);

export default function App() {
  return (
    <div className={`relative flex h-screen flex-col overflow-hidden bg-[#f0f0f0] text-[17px] ${UI}`}>
      <header className="flex h-[34px] shrink-0 items-center gap-[9px] bg-[#f3f3f3] pt-px pl-0.5 text-[#8b8b8b]">
        <svg viewBox="0 0 24 24" className="size-6" fill="none" aria-hidden="true"><PcbBase /></svg>
        <span>*week06_XIAO — PCB Editor</span>
      </header>
      <nav className="flex h-7 shrink-0 items-center gap-[21px] bg-white pt-[3px] pl-[11px] text-[#6f6f6f]">
        {["File", "Edit", "View", "Place", "Route", "Inspect", "Tools", "Preferences", "Help"].map((m) => <button key={m}>{m}</button>)}
      </nav>
      <div className="flex h-14 shrink-0 items-center pl-1.5">
        {topItems.map((it, i) => {
          if (!it) return <span key={i} className="mx-1 h-[42px] w-px bg-[#8d8d8d]" />;
          const [name, Ic] = it;
          return <button key={i} aria-label={name} className="grid h-[46px] w-[49px] place-items-center"><Ic /></button>;
        })}
      </div>
      <div className="flex h-[50px] shrink-0 items-center gap-2 pb-px pl-2">
        <Combo name="Track width" text="Track: use netclass width" w="w-[225px]" />
        <button aria-label="Use existing track width" className="size-[46px] border border-[#0067c0] bg-[#b3d7f2]" />
        <Combo name="Via size" text="Via: use netclass sizes" w="w-[437px]" />
        <Combo name="Grid" text="Grid: 0.5000 mm (19.69 mils)" w="w-[293px]" />
        <span className="-mx-0.5 h-[42px] w-px bg-[#8d8d8d]" />
        <Combo name="Zoom" text="Zoom 8.00" w="w-[144px]" />
      </div>
      <main className="flex min-h-0 flex-1">
        <aside className="flex w-[53px] shrink-0 flex-col items-center pt-1.5 pr-px">
          {sideItems.map((it, i) => {
            if (!it) return <span key={i} className="my-1 h-px w-[42px] shrink-0 bg-[#8d8d8d]" />;
            const [name, Ic, on] = it;
            return (
              <div key={i} className="grid h-[49px] shrink-0 place-items-center">
                <button aria-label={name} aria-pressed={!!on} className={`grid size-[46px] place-items-center border ${on ? "border-[#1173c7] bg-[#b3d7f2]" : "border-transparent"}`}><Ic /></button>
              </div>
            );
          })}
        </aside>
        <div className="min-w-0 flex-1"><Board /></div>
      </main>
      <Dialog />
      <svg className="pointer-events-none absolute top-0 left-0 h-7 w-5" viewBox="0 0 20 28" aria-hidden="true">
        <path d="M0 0v23l5-5 4 9 4-2-4-8h7z" fill="#fff" stroke="#111" strokeWidth="1.200" />
      </svg>
    </div>
  );
}
